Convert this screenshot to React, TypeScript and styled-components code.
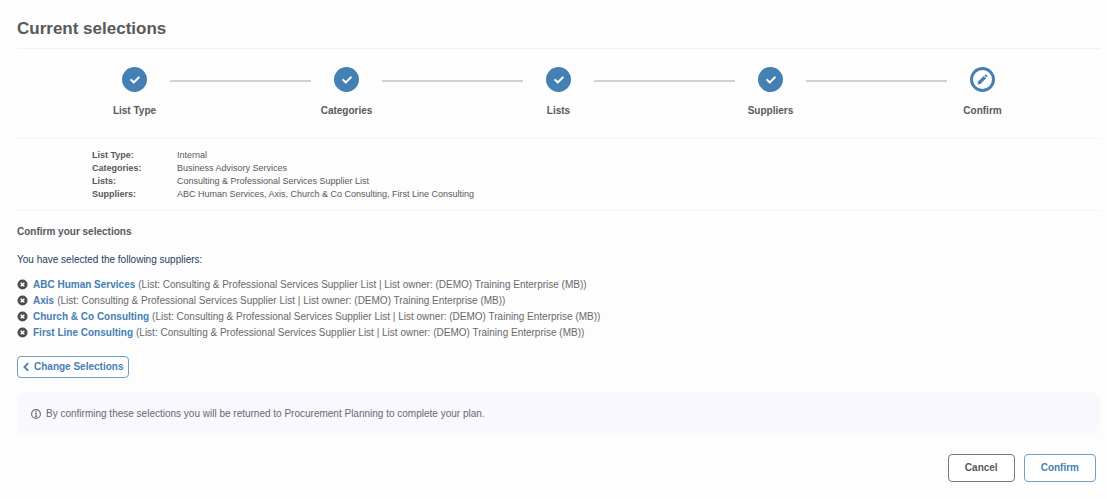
import React from "react";
import styled, { createGlobalStyle } from "styled-components";
import { FaCheck } from "react-icons/fa";

const ink = "#58595b";
const softInk = "#68696b";
const blue = "#4480b4";

const GlobalStyle = createGlobalStyle`
  *, *::before, *::after { box-sizing: border-box; }
  body {
    margin: 0;
    background: #fdfdfd;
    color: ${ink};
    font-family: "Liberation Sans", Arial, Helvetica, sans-serif;
    font-size: 10px;
    line-height: 16px;
  }
`;

const Page = styled.main`
  padding: 17px 7px 16px 17px;
`;

const Title = styled.h1`
  margin: 0;
  padding-bottom: 7px;
  border-bottom: 1px solid #f1f1f1;
  font-size: 17px;
  line-height: 24px;
`;

const Stepper = styled.ol`
  display: flex;
  margin: 0;
  padding: 18px 82px 19px;
  list-style: none;
`;

const Step = styled.li<{ $last?: boolean }>`
  display: flex;
  flex: ${(p) => (p.$last ? "none" : "1")};

  &:not(:last-child)::after {
    content: "";
    flex: 1;
    height: 2px;
    margin-top: 13px;
    background: #d2d0d1;
  }
`;

const StepBody = styled.div`
  display: flex;
  flex-direction: column;
  align-items: center;
  gap: 11px;
  width: 71px;
  font-weight: bold;
`;

const StepMark = styled.span<{ $current?: boolean }>`
  display: grid;
  place-items: center;
  width: 25px;
  height: 25px;
  border: 3px solid ${blue};
  border-radius: 50%;
  background: ${(p) => (p.$current ? "#fff" : blue)};
  color: ${(p) => (p.$current ? blue : "#fff")};
`;

const Summary = styled.dl`
  display: grid;
  grid-template-columns: 85px 1fr;
  margin: 0;
  padding: 10px 75px 9px;
  border: dotted #e9e9e9;
  border-width: 1px 0;
  font-size: 9px;
  line-height: 13px;
`;

const Term = styled.dt`
  font-weight: bold;
`;

const Detail = styled.dd`
  margin: 0;
`;

const SectionTitle = styled.h2`
  margin: 13px 0 12px;
  font-size: 10px;
  line-height: 16px;
`;

const Intro = styled.p`
  margin: 0 0 9px;
  color: #24405f;
`;

const SupplierList = styled.ul`
  margin: 0 0 15px;
  padding: 0;
  list-style: none;
`;

const SupplierRow = styled.li`
  display: flex;
  align-items: center;
  height: 16px;
  color: ${softInk};
`;

const RemoveButton = styled.button`
  display: flex;
  margin: 0 5px 0 0;
  padding: 0 0 1px;
  border: 0;
  background: none;
  color: #4c4d4f;
  cursor: pointer;
`;

const SupplierLink = styled.a`
  margin-right: 3px;
  color: ${blue};
  font-weight: bold;
  text-decoration: none;
`;

const Button = styled.button<{ $tone?: "dark"; $small?: boolean }>`
  display: ${(p) => (p.$small ? "flex" : "inline-flex")};
  align-items: center;
  justify-content: center;
  gap: 5px;
  height: ${(p) => (p.$small ? "22px" : "28px")};
  padding: 0 ${(p) => (p.$small ? "5px" : "16px")};
  border: 1px solid ${(p) => (p.$tone === "dark" ? "#77787a" : "#6f9fca")};
  border-radius: 4px;
  background: #fff;
  color: ${(p) => (p.$tone === "dark" ? ink : blue)};
  font: bold 10px/16px "Liberation Sans", Arial, Helvetica, sans-serif;
  cursor: pointer;
`;

const Notice = styled.p`
  display: flex;
  align-items: center;
  gap: 5px;
  margin: 14px 0 19px;
  padding: 14px 14px 13px;
  border-radius: 9px;
  background: #f8f8fe;
  color: ${softInk};
`;

const Actions = styled.div`
  display: flex;
  justify-content: flex-end;
  gap: 9px;
  padding-right: 4px;
`;

const PencilIcon = () => (
  <svg width="11" height="11" viewBox="0 0 11 11" aria-hidden="true">
    <path
      fill="currentColor"
      d="M.5 10.5 1.1 7.5 6.8 1.9 9.1 4.2 3.5 9.9ZM7.4 1.4 8.2.7Q8.8.2 9.3.7L10.3 1.7Q10.8 2.2 10.3 2.8L9.6 3.6Z"
    />
  </svg>
);

const RemoveIcon = () => (
  <svg width="11" height="11" viewBox="0 0 11 11" aria-hidden="true">
    <circle cx="5.5" cy="5.5" r="5" fill="currentColor" />
    <path d="M3.7 3.7 7.3 7.3M7.3 3.7 3.7 7.3" stroke="#fff" strokeWidth="1.6" />
  </svg>
);

const ChevronIcon = () => (
  <svg width="6" height="10" viewBox="0 0 6 10" aria-hidden="true">
    <path d="M5.2 1.2 1.4 5 5.2 8.8" fill="none" stroke="currentColor" strokeWidth="1.8" />
  </svg>
);

const InfoIcon = () => (
  <svg width="10" height="10" viewBox="0 0 10 10" aria-hidden="true">
    <circle cx="5" cy="5" r="4.4" fill="none" stroke="currentColor" strokeWidth="1.1" />
    <path d="M4 4.5H5.2V7.2M3.8 7.3H6.4" fill="none" stroke="currentColor" strokeWidth="1" />
    <circle cx="5" cy="2.8" r=".8" fill="currentColor" />
  </svg>
);

const steps = ["List Type", "Categories", "Lists", "Suppliers", "Confirm"];
const suppliers = ["ABC Human Services", "Axis", "Church & Co Consulting", "First Line Consulting"];
const listName = "Consulting & Professional Services Supplier List";

const summary = [
  ["List Type:", "Internal"],
  ["Categories:", "Business Advisory Services"],
  ["Lists:", listName],
  ["Suppliers:", suppliers.join(", ")],
];

export default function App() {
  return (
    <>
      <GlobalStyle />
      <Page>
        <Title>Current selections</Title>
        <Stepper>
          {steps.map((label, i) => {
            const current = i === steps.length - 1;
            return (
              <Step key={label} $last={current} aria-current={current ? "step" : undefined}>
                <StepBody>
                  <StepMark $current={current}>
                    {current ? <PencilIcon /> : <FaCheck size={10} aria-hidden />}
                  </StepMark>
                  {label}
                </StepBody>
              </Step>
            );
          })}
        </Stepper>
        <Summary>
          {summary.map(([term, detail]) => (
            <React.Fragment key={term}>
              <Term>{term}</Term>
              <Detail>{detail}</Detail>
            </React.Fragment>
          ))}
        </Summary>
        <SectionTitle>Confirm your selections</SectionTitle>
        <Intro>You have selected the following suppliers:</Intro>
        <SupplierList>
          {suppliers.map((name) => (
            <SupplierRow key={name}>
              <RemoveButton type="button" aria-label={`Remove ${name}`}>
                <RemoveIcon />
              </RemoveButton>
              <SupplierLink href="#">{name}</SupplierLink>
              <span>(List: {listName} | List owner: (DEMO) Training Enterprise (MB))</span>
            </SupplierRow>
          ))}
        </SupplierList>
        <Button type="button" $small>
          <ChevronIcon />
          Change Selections
        </Button>
        <Notice>
          <InfoIcon />
          By confirming these selections you will be returned to Procurement Planning to complete your plan.
        </Notice>
        <Actions>
          <Button type="button" $tone="dark">Cancel</Button>
          <Button type="button">Confirm</Button>
        </Actions>
      </Page>
    </>
  );
}
